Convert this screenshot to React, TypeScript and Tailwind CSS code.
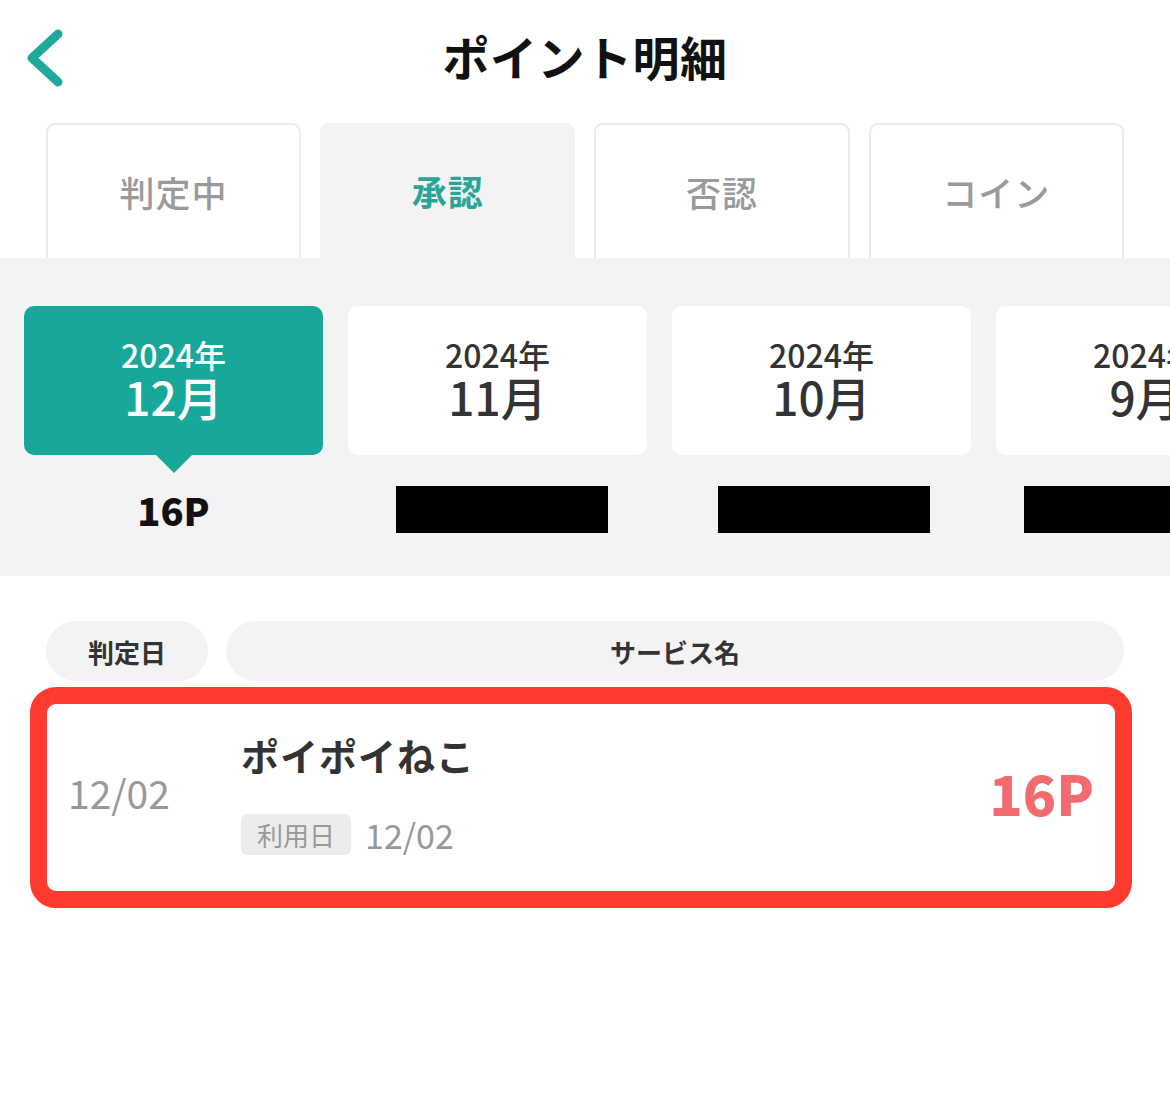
import React from "react";

const months = [
  { year: "2024年", month: "12月", active: true, points: "16P", boxOffset: "" },
  { year: "2024年", month: "11月", active: false, points: null, boxOffset: "ml-[9px]" },
  { year: "2024年", month: "10月", active: false, points: null, boxOffset: "ml-[5px]" },
  { year: "2024年", month: "9月", active: false, points: null, boxOffset: "ml-[-31px]" },
];

const tabs = [
  { label: "判定中", active: false },
  { label: "承認", active: true },
  { label: "否認", active: false },
  { label: "コイン", active: false },
];

export default function App() {
  return (
    <div className="w-[1170px] min-h-[1116px] bg-white font-['Noto_Sans_CJK_JP','Noto_Sans',sans-serif] text-[#333]">
      {/* header */}
      <header className="relative h-[123px] flex items-center justify-center pb-[12px]">
        <button className="absolute left-[22px] top-[24px] w-[50px] h-[68px] flex items-center justify-center">
          <svg width="50" height="68" viewBox="0 0 50 68">
            <polyline
              points="36,10 10,34 36,58"
              fill="none"
              stroke="#1fa99c"
              strokeWidth="9"
              strokeLinecap="round"
              strokeLinejoin="round"
            />
          </svg>
        </button>
        <h1 className="text-[47px] font-bold text-[#111] leading-none tracking-[0.5px]">ポイント明細</h1>
      </header>

      {/* status tabs */}
      <nav className="flex gap-[19px] px-[46px]">
        {tabs.map((t) => (
          <div
            key={t.label}
            className={
              t.active
                ? "w-[256px] h-[135px] rounded-t-[9px] bg-[#f3f3f3] flex items-center justify-center pt-[2px]"
                : "w-[256px] h-[135px] rounded-t-[9px] bg-white border-2 border-b-0 border-[#ebebeb] flex items-center justify-center pt-[2px]"
            }
          >
            <span
              className={
                t.active
                  ? "text-[35px] font-bold text-[#2aa59a] tracking-[1px]"
                  : "text-[35px] font-medium text-[#9a9a9a] tracking-[1px]"
              }
            >
              {t.label}
            </span>
          </div>
        ))}
      </nav>

      {/* month selector */}
      <section className="bg-[#f3f3f3] h-[318px] pt-[48px] overflow-hidden">
        <div className="flex gap-[25px] px-[24px]">
          {months.map((m) => (
            <div key={m.month} className="w-[299px] shrink-0 flex flex-col items-center">
              <div
                className={
                  m.active
                    ? "relative w-full h-[149px] rounded-[10px] bg-[#17a89b] text-white flex flex-col items-center justify-center pb-[8px]"
                    : "relative w-full h-[149px] rounded-[10px] bg-white text-[#333] flex flex-col items-center justify-center pb-[8px]"
                }
              >
                <span className="text-[32px] font-medium leading-[38px]">{m.year}</span>
                <span className="text-[46px] font-medium leading-[46px]">{m.month}</span>
                {m.active && (
                  <span className="absolute left-1/2 -translate-x-1/2 top-full w-0 h-0 border-l-[18px] border-r-[18px] border-t-[18px] border-l-transparent border-r-transparent border-t-[#17a89b]" />
                )}
              </div>
              <div className="mt-[31px] h-[47px] flex items-center justify-center">
                {m.points ? (
                  <span className="text-[38px] font-black text-[#111] leading-none">{m.points}</span>
                ) : (
                  <span className={`block w-[212px] h-[47px] bg-black ${m.boxOffset}`} />
                )}
              </div>
            </div>
          ))}
        </div>
      </section>

      {/* list */}
      <section className="px-[30px] pt-[45px]">
        <div className="flex gap-[18px] px-[16px] h-[60px] w-[1110px]">
          <div className="w-[162px] rounded-full bg-[#f3f3f3] flex items-center justify-center">
            <span className="text-[26px] font-bold text-[#333]">判定日</span>
          </div>
          <div className="flex-1 rounded-full bg-[#f3f3f3] flex items-center justify-center">
            <span className="text-[26px] font-bold text-[#333]">サービス名</span>
          </div>
        </div>

        <div className="mt-[6px] w-[1102px] h-[221px] rounded-[26px] border-[17px] border-[#ff3b30] bg-white flex items-center pl-[21px] pr-[21px] pb-[10px]">
          <div className="w-[173px] text-[39px] text-[#999] leading-none">12/02</div>
          <div className="flex-1 flex flex-col">
            <span className="text-[38px] font-bold text-[#333] leading-[50px] tracking-[1px]">ポイポイねこ</span>
            <div className="mt-[34px] flex items-center gap-[14px]">
              <span className="h-[41px] px-[16px] rounded-[6px] bg-[#ececec] text-[26px] text-[#999] flex items-center">利用日</span>
              <span className="text-[34px] text-[#999] leading-none">12/02</span>
            </div>
          </div>
          <div className="text-[55px] font-black text-[#f36b6f] leading-none">16P</div>
        </div>
      </section>
    </div>
  );
}
